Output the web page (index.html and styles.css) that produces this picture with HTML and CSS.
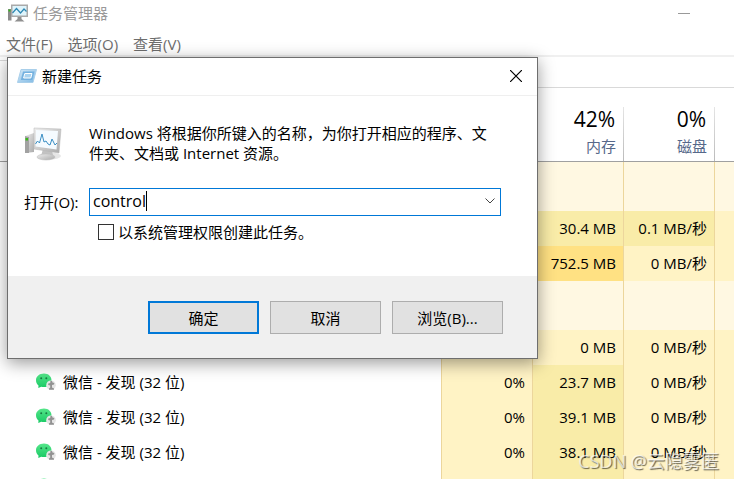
FILE: index.html
```
<!DOCTYPE html>
<html lang="zh-CN">
<head>
    <meta charset="UTF-8">
    <meta name="viewport" content="width=device-width, initial-scale=1.0">
    <title>任务管理器</title>
    <link rel="stylesheet" href="styles.css">
</head>
<body>
    <!-- Shared icons -->
    <svg class="sprite" aria-hidden="true">
        <defs>
            <linearGradient id="greenFill" x1="0" y1="0" x2="0" y2="1">
                <stop offset="0" stop-color="#55e68a"/>
                <stop offset="1" stop-color="#18c964"/>
            </linearGradient>
            <linearGradient id="metalFill" x1="0" y1="0" x2="1" y2="1">
                <stop offset="0" stop-color="#eeeeee"/>
                <stop offset="1" stop-color="#aaaaaa"/>
            </linearGradient>
            <linearGradient id="blueFill" x1="0" y1="0" x2="1" y2="1">
                <stop offset="0" stop-color="#d5e9f7"/>
                <stop offset="1" stop-color="#7db8e4"/>
            </linearGradient>
        </defs>
        <symbol id="wechat" viewBox="0 0 20 18">
            <path d="M8 .500C3.400.500 0 3.400 0 7.200c0 2.300 1 4.100 2.500 5.300L2.300 15l2.900-1.200c.9.200 1.800.3 2.800.3 4.400 0 7.500-3.100 7.500-6.900S12.400.5 8 .5z" fill="url(#greenFill)"/>
            <circle cx="5.200" cy="5.300" r="1" fill="#187a42"/>
            <circle cx="10.300" cy="5.300" r="1" fill="#187a42"/>
            <circle cx="15" cy="12.200" r="4.800" fill="#e6e6e6"/>
            <path d="M14.500 7.800l1.500.2.500 1.500 1.800.5-.3 1.500-2 .5v2.500l2 1v1.200h-5v-1.200l1.200-1V12.500l-2-.5v-1.500l2-.5z" fill="#929292"/>
        </symbol>
    </svg>

    <div class="manager">
        <header class="titlebar">
            <svg class="app-icon" viewBox="0 0 20 18" aria-hidden="true">
                <path d="M0 5h3.500v11.500H0z" fill="#8b8b8b"/>
                <path d="M.5 5.500h2v2h-2z" fill="#35b51b"/>
                <path d="M3 .5h17v12.500H3z" fill="#a9a9a9"/>
                <path d="M4.500 2h14v9.500h-14z" fill="#dff4fb"/>
                <path d="M4.500 9l4-4.500 4 4.500 3.500-4 2.500 2.500" fill="none" stroke="#2c87b3" stroke-width="1.200"/>
                <path d="M9.500 13h4v2l3 2.500h-10l3-2.500z" fill="#8f8f8f"/>
            </svg>
            <span class="title">任务管理器</span>
            <button class="minimize" aria-label="最小化"></button>
        </header>

        <nav class="menu">
            <button>文件(F)</button>
            <button>选项(O)</button>
            <button>查看(V)</button>
        </nav>

        <div class="tabs"><div class="tab-active"></div></div>

        <table class="processes">
            <colgroup>
                <col>
                <col class="metric">
                <col class="metric">
                <col class="metric">
                <col class="metric-last">
            </colgroup>
            <thead>
                <tr>
                    <th></th>
                    <th></th>
                    <th><strong>42%</strong><span>内存</span></th>
                    <th><strong>0%</strong><span>磁盘</span></th>
                    <th></th>
                </tr>
            </thead>
            <tbody>
                <tr class="group"><td></td><td></td><td></td><td></td><td></td></tr>
                <tr><td></td><td></td><td class="warm">30.4 MB</td><td class="warm">0.1 MB/秒</td><td></td></tr>
                <tr><td></td><td></td><td class="hot">752.5 MB</td><td>0 MB/秒</td><td></td></tr>
                <tr class="group"><td></td><td></td><td></td><td></td><td></td></tr>
                <tr><td></td><td></td><td>0 MB</td><td>0 MB/秒</td><td></td></tr>
                <tr>
                    <td><div class="process"><svg><use href="#wechat"/></svg>微信 - 发现 (32 位)</div></td>
                    <td>0%</td><td class="warm">23.7 MB</td><td>0 MB/秒</td><td></td>
                </tr>
                <tr>
                    <td><div class="process"><svg><use href="#wechat"/></svg>微信 - 发现 (32 位)</div></td>
                    <td>0%</td><td class="warm">39.1 MB</td><td>0 MB/秒</td><td></td>
                </tr>
                <tr>
                    <td><div class="process"><svg><use href="#wechat"/></svg>微信 - 发现 (32 位)</div></td>
                    <td>0%</td><td class="warm">38.1 MB</td><td>0 MB/秒</td><td></td>
                </tr>
                <tr>
                    <td><div class="process"><svg><use href="#wechat"/></svg></div></td>
                    <td></td><td class="warm"></td><td></td><td></td>
                </tr>
            </tbody>
        </table>
    </div>

    <form class="dialog" role="dialog" aria-labelledby="dialogTitle">
        <div class="dialog-title">
            <svg class="run-icon" viewBox="0 0 20 14" aria-hidden="true">
                <path d="M4 .5h15.500L16 13.500H.5z" fill="url(#blueFill)" stroke="#a9cfea"/>
                <path d="M6 2.500h11.500l-2.200 8.500H3.800z" fill="#74b1df"/>
                <path d="M7.800 4.500h7.200l-1.200 4.500H6.600z" fill="#a9d3f0" stroke="#fff"/>
            </svg>
            <h1 id="dialogTitle">新建任务</h1>
            <button type="button" class="close" aria-label="关闭">
                <svg viewBox="0 0 12 12"><path d="M0 0l12 12M12 0L0 12" fill="none" stroke="#000" stroke-width="1.200"/></svg>
            </button>
        </div>

        <div class="dialog-body">
            <svg class="computer" viewBox="0 0 38 34" aria-hidden="true">
                <path d="M1 9l9-3v19l-9 1z" fill="url(#metalFill)"/>
                <path d="M1 9l4 1v16H1z" fill="#a2a2a2"/>
                <path d="M1.500 11h2.500v2.500H1.500z" fill="#39b81a"/>
                <ellipse cx="26" cy="29" rx="11" ry="3.500" fill="#e6e6e6"/>
                <path d="M19 22h9l1 7H17z" fill="#c2c2c2"/>
                <ellipse cx="22" cy="30" rx="9" ry="3" fill="url(#metalFill)" stroke="#bbb" stroke-width=".5"/>
                <path d="M10 1l27 1-2 24-25-4z" fill="url(#metalFill)" stroke="#b5b5b5" stroke-width=".5"/>
                <path d="M12 3l22 1-1.500 18.500L11.500 19.500z" fill="#f5fbff"/>
                <path d="M11.500 17l2-3 2 2 2.500-9 2 8 2-1 2 3 2 1 2-6 2 4 1 2 2-2" fill="none" stroke="#3b8fc4"/>
            </svg>
            <p class="hint">Windows 将根据你所键入的名称，为你打开相应的程序、文件夹、文档或 Internet 资源。</p>

            <label class="open-label" for="command">打开(O):</label>
            <div class="combo">
                <input type="text" id="command" value="control" size="7">
                <span class="caret"></span>
                <button type="button" class="drop" aria-label="显示列表">
                    <svg viewBox="0 0 10 6"><path d="M.5.500L5 5 9.500.5" fill="none" stroke="#444"/></svg>
                </button>
            </div>

            <label class="admin"><input type="checkbox">以系统管理权限创建此任务。</label>
        </div>

        <div class="dialog-actions">
            <button type="button" class="primary">确定</button>
            <button type="button">取消</button>
            <button type="button">浏览(B)...</button>
        </div>
    </form>

    <div class="watermark">CSDN @云隐雾匿</div>
</body>
</html>
```

FILE: styles.css
```
:root {
    --accent: #0078d7;
    --cool: #fff3c5;
    --group: #fff8e2;
    --warm: #f9eca8;
    --hot: #ffe183;
    --column-line: #ecd69c;
}

* {
    box-sizing: border-box;
}

body {
    margin: 0;
    position: relative;
    background: #fff;
    color: #000;
    font: 15px/20px "Open Sans", "Noto Sans CJK SC", sans-serif;
}

button,
input {
    font: inherit;
    color: inherit;
    margin: 0;
    padding: 0;
    border: 0;
    background: none;
}

svg {
    display: block;
}

.sprite {
    position: absolute;
    width: 0;
    height: 0;
}

/* Task manager window */
.manager {
    height: 100vh;
    overflow: hidden;
}

.titlebar {
    display: flex;
    align-items: center;
    height: 28px;
    padding: 0 44px 2px 8px;
    color: #999;
}

.app-icon {
    width: 20px;
    height: 18px;
    margin-right: 5px;
}

.minimize {
    width: 12px;
    height: 20px;
    margin-left: auto;
    background: linear-gradient(#999, #999) center / 12px 1px no-repeat;
}

.menu {
    display: flex;
    gap: 15px;
    height: 29px;
    padding: 6px 6px 0;
    align-items: flex-start;
    border-bottom: 2px solid #f0f0f0;
    color: #6d6d6d;
}

.tabs {
    height: 31px;
    padding-top: 3px;
    border-bottom: 1px solid #d9d9d9;
}

.tab-active {
    width: 48px;
    height: 28px;
    border-top: 1px solid #d9d9d9;
    background: #fff;
}

/* Process list */
.processes {
    width: 100%;
    table-layout: fixed;
    border-collapse: separate;
    border-spacing: 0;
}

.metric {
    width: 91px;
}

.metric-last {
    width: 20px;
}

.processes th {
    height: 74px;
    padding: 0 7px 3px 0;
    border-bottom: 1px solid #a0a0a0;
    background: linear-gradient(#e5e5e5, #bbb) left bottom / 1px 54px no-repeat;
    text-align: right;
    vertical-align: bottom;
    font-weight: normal;
}

.processes th:first-child {
    background: none;
}

.processes strong {
    display: block;
    padding-right: 1px;
    font-size: 21px;
    line-height: 30px;
    font-weight: normal;
}

.processes span {
    display: block;
    line-height: 24px;
    color: #56688a;
}

.processes td {
    height: 35px;
    padding: 0 7px 2px 0;
    border-left: 1px solid var(--column-line);
    background: var(--cool);
    text-align: right;
    white-space: nowrap;
}

.processes .group td {
    height: 49px;
    background: var(--group);
}

.processes .warm {
    background: var(--warm);
}

.processes .hot {
    background: var(--hot);
}

.processes tr td:first-child {
    border-left: 0;
    background: #fff;
    text-align: left;
}

.process {
    display: flex;
    align-items: center;
    gap: 7px;
    padding-left: 36px;
}

.process svg {
    width: 20px;
    height: 18px;
}

/* New task dialog */
.dialog {
    position: absolute;
    top: 57px;
    left: 7px;
    width: 531px;
    border: 1px solid #6e6e6e;
    background: #fff;
    box-shadow: 0 4px 16px rgba(0, 0, 0, 0.4);
}

.dialog-title {
    display: flex;
    align-items: center;
    height: 38px;
    padding: 0 15px 1px 9px;
    border-bottom: 1px solid #efefef;
}

.run-icon {
    width: 20px;
    height: 14px;
    margin-right: 5px;
}

.dialog-title h1 {
    margin: 0;
    font-size: 15px;
    font-weight: normal;
}

.close {
    margin-left: auto;
}

.close svg {
    width: 12px;
    height: 12px;
}

.dialog-body {
    display: grid;
    grid-template-columns: 65px 1fr;
    padding: 27px 36px 34px 16px;
}

.computer {
    width: 38px;
    height: 34px;
    margin-top: 4px;
}

.hint {
    margin: 0;
    padding-right: 8px;
}

.open-label {
    align-self: center;
    margin-top: 25px;
}

.combo {
    display: flex;
    align-items: center;
    height: 28px;
    margin-top: 25px;
    padding: 0 5px 2px 3px;
    border: 1px solid var(--accent);
}

.combo input {
    field-sizing: content;
    outline: none;
    font-size: 16px;
}

.caret {
    width: 1px;
    height: 20px;
    background: #000;
}

.drop {
    margin-left: auto;
}

.drop svg {
    width: 10px;
    height: 6px;
}

.admin {
    grid-column: 2;
    display: flex;
    align-items: center;
    gap: 4px;
    margin-top: 6px;
    padding-left: 9px;
}

.admin input {
    appearance: none;
    width: 16px;
    height: 16px;
    border: 1px solid #333;
    background: #fff;
}

.dialog-actions {
    display: flex;
    justify-content: flex-end;
    gap: 11px;
    padding: 25px 34px 24px;
    background: #f0f0f0;
}

.dialog-actions button {
    width: 111px;
    height: 33px;
    border: 1px solid #adadad;
    background: #e1e1e1;
}

.dialog-actions .primary {
    border: 2px solid var(--accent);
}

/* Watermark over the corner of the list */
.watermark {
    position: absolute;
    right: 15px;
    bottom: 4px;
    color: rgba(255, 255, 255, 0.7);
    font-size: 18px;
    line-height: 28px;
    text-shadow: 1px 1px 1px rgba(0, 0, 0, 0.6);
}
```
